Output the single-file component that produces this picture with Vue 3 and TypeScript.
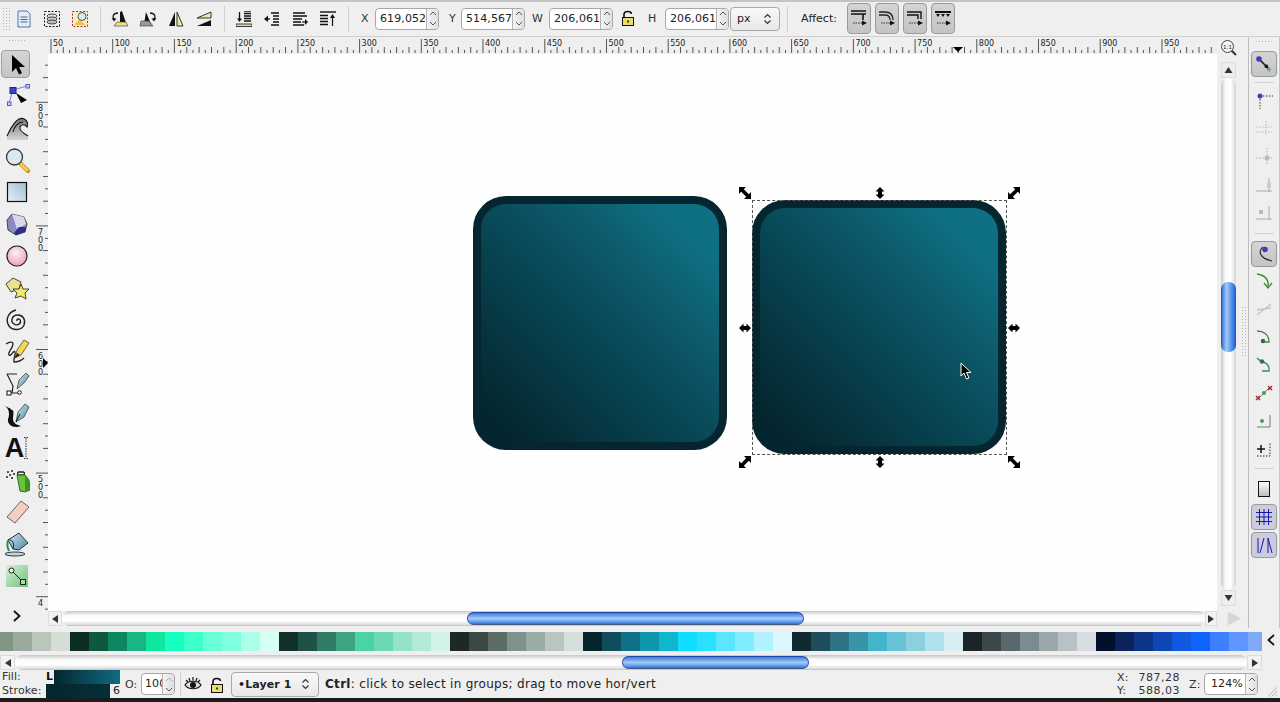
<script setup lang="ts">
const fields = [
  { label: 'X', value: '619,052', cls: 'lx' },
  { label: 'Y', value: '514,567', cls: 'ly' },
  { label: 'W', value: '206,061', cls: 'lw' },
  { label: 'H', value: '206,061', cls: 'lh' },
]

const swatches: string[] = [
  '#7f9684', '#9aaa9c', '#b9c6ba', '#d5ddd6',
  '#0d2e23', '#0e5840', '#0d8762', '#18b585', '#0fe69e', '#15ffc0', '#3dffca', '#66ffd6', '#80ffde', '#aaffe8', '#d6fff4',
  '#11302a', '#1f5247', '#2f7d66', '#3ea383', '#4ad4a6', '#6bd9b5', '#94e3c8', '#b3e9d8', '#d1f3e8',
  '#1e2926', '#3c4845', '#5b6c67', '#7e918c', '#9aaca6', '#b8c5c1', '#d6dedc',
  '#06252d', '#0f4c5c', '#10708a', '#0f97ad', '#10b6cd', '#10dcff', '#2ae0ff', '#5ae6ff', '#80ecff', '#b0f2ff', '#daf6ff',
  '#0f2a31', '#1f4d5c', '#2e7485', '#3a94a8', '#44b4cc', '#69c3d6', '#8cd0e0', '#b0e0ea', '#d5edf3',
  '#1b2528', '#3d4849', '#5b686b', '#7b8b90', '#9aa8ac', '#b7c2c6', '#d6dcdf',
  '#020f2d', '#0b2358', '#0c3588', '#0f47b5', '#1059e0', '#0f66ff', '#3a80ff', '#5f96ff', '#80aaf8',
]

const hStep = 1.2344
const hTicks = Array.from({ length: 189 }, (_, i) => {
  const x = 3 + i * 5 * hStep
  const top = i % 10 === 0 ? 2 : i % 2 === 0 ? 10 : 13
  return { x: +x.toFixed(1), top }
})
const hLabels = Array.from({ length: 19 }, (_, i) => ({
  x: +(5 + i * 50 * hStep).toFixed(1),
  t: String(50 + i * 50),
}))

const vStep = 1.236
const vTicks = Array.from({ length: 46 }, (_, i) => {
  const y = 48.3 + (i - 4) * 10 * vStep
  const n = i - 4
  const mod = ((n % 10) + 10) % 10
  const left = mod === 0 ? 3 : mod % 2 === 0 ? 10 : 12
  return { y: +y.toFixed(1), left }
})
const vLabels = [
  { y: 48.3, d: ['8', '0', '0'] },
  { y: 171.9, d: ['7', '0', '0'] },
  { y: 295.5, d: ['6', '0', '0'] },
  { y: 419.1, d: ['5', '0', '0'] },
  { y: 542.7, d: ['4'] },
]

const diag = 'M0 0H7L4.8 2.2 9.8 7.2 12 5V12H5L7.2 9.8 2.2 4.800 0 7Z'
const hor = 'M0 6 4.500 1.500V4H7.500V1.500L12 6 7.500 10.500V8H4.500V10.500Z'
const handles = [
  { x: 697, y: 139, d: diag, r: 0 },
  { x: 832, y: 139, d: hor, r: 90 },
  { x: 966, y: 139, d: diag, r: 90 },
  { x: 697, y: 274, d: hor, r: 0 },
  { x: 966, y: 274, d: hor, r: 0 },
  { x: 697, y: 408, d: diag, r: 90 },
  { x: 832, y: 408, d: hor, r: 90 },
  { x: 966, y: 408, d: diag, r: 0 },
]
</script>

<template>
  <div class="app">
    <svg class="defs" width="0" height="0" aria-hidden="true">
      <defs>
        <linearGradient id="gRect" x1="0" y1="1" x2="1" y2="0"><stop offset="0" stop-color="#e6f0f4" /><stop offset="1" stop-color="#9dc0d2" /></linearGradient>
        <radialGradient id="gPink" cx=".45" cy=".35" r=".7"><stop offset="0" stop-color="#fdf0f4" /><stop offset="1" stop-color="#eb9db5" /></radialGradient>
        <linearGradient id="gWave" x1="0" y1="0" x2="0" y2="1"><stop offset="0" stop-color="#777" /><stop offset="1" stop-color="#d4d4d4" /></linearGradient>
        <linearGradient id="gGreen" x1="0" y1="0" x2="1" y2="1"><stop offset="0" stop-color="#d6f0d6" /><stop offset="1" stop-color="#6fc07f" /></linearGradient>
        <linearGradient id="gNib" x1="0" y1="0" x2="1" y2="1"><stop offset="0" stop-color="#cfe3ee" /><stop offset="1" stop-color="#4a8aa8" /></linearGradient>
        <linearGradient id="gPage" x1="0" y1="0" x2="0" y2="1"><stop offset="0" stop-color="#fff" /><stop offset="1" stop-color="#bbb" /></linearGradient>
      </defs>
    </svg>

    <header class="topbar">
      <span class="grip-v"></span>
      <button class="tb">
        <svg width="16" height="18" viewBox="0 0 16 18"><path d="M2 1H11L14 4V17H2Z" fill="#e4edf6" stroke="#4f79a8" /><path d="M4.500 7H11.500M4.500 9.500H11.500M4.500 12H11.500" stroke="#3a6ea5" /></svg>
      </button>
      <button class="tb">
        <svg width="18" height="18" viewBox="0 0 18 18"><rect x="1.500" y="1.500" width="15" height="15" fill="none" stroke="#111" stroke-dasharray="2 1.500" /><ellipse cx="9" cy="6" rx="5" ry="2" fill="#ddd" stroke="#444" /><ellipse cx="9" cy="9" rx="5" ry="2" fill="#ccc" stroke="#444" /><ellipse cx="9" cy="12" rx="5" ry="2" fill="#bbb" stroke="#444" /></svg>
      </button>
      <button class="tb">
        <svg width="18" height="18" viewBox="0 0 18 18"><rect x="1.500" y="1.500" width="15" height="15" fill="#f6eec2" stroke="#a33" stroke-dasharray="2 1.500" /><path d="M3 15 8 10 15 15Z" fill="#e6c64a" /><circle cx="11" cy="6.500" r="4" fill="#dce8ee" stroke="#555" /></svg>
      </button>
      <span class="sep"></span>
      <button class="tb">
        <svg width="18" height="18" viewBox="0 0 18 18"><path d="M11 1 15 13H9V2Z" fill="#111" /><path d="M3 16H17L15 12H6Z" fill="#efe08a" stroke="#333" stroke-width=".6" /><path d="M7 3C2 3 1 7 3 9" fill="none" stroke="#111" stroke-width="1.300" /><path d="M.5 8 3 11.500 5.500 8.500Z" fill="#111" /></svg>
      </button>
      <button class="tb">
        <svg width="18" height="18" viewBox="0 0 18 18"><path d="M7 2 12 14H5Z" fill="#111" /><path d="M1 16H14L10 11H2Z" fill="#999" stroke="#333" stroke-width=".6" /><path d="M11 3C16 3 17 7 15 9" fill="none" stroke="#111" stroke-width="1.300" /><path d="M17.500 8 15 11.500 12.500 8.500Z" fill="#111" /></svg>
      </button>
      <button class="tb">
        <svg width="16" height="16" viewBox="0 0 16 16"><path d="M7 1V15H1Z" fill="#111" /><path d="M9 1V15H15Z" fill="#f0e6a8" stroke="#333" /></svg>
      </button>
      <button class="tb">
        <svg width="16" height="16" viewBox="0 0 16 16"><path d="M15 1V7H1Z" fill="#f0e6a8" stroke="#333" /><path d="M15 9V15H1Z" fill="#111" /></svg>
      </button>
      <span class="sep"></span>
      <button class="tb">
        <svg width="16" height="16" viewBox="0 0 16 16"><path d="M8 0H15M8 2.500H15M8 5H15M8 7.500H15M8 10H15" stroke="#111" stroke-width="1.300" /><path d="M3.500 1V8" stroke="#111" stroke-width="1.300" /><path d="M1 7.500H6L3.500 11Z" fill="#111" /><path d="M0 13H16V15.500H0Z" fill="#e8dc9a" stroke="#111" stroke-width=".8" /></svg>
      </button>
      <button class="tb">
        <svg width="16" height="16" viewBox="0 0 16 16"><path d="M7 2H15M9 5H15M9 8H15M9 11H15M7 14H15" stroke="#111" stroke-width="1.300" /><path d="M1 8H6" stroke="#111" stroke-width="1.300" /><path d="M4 4.500V11L0 8Z" fill="#111" /></svg>
      </button>
      <button class="tb">
        <svg width="16" height="16" viewBox="0 0 16 16"><path d="M1 2H13M1 5H15M1 8H10M1 11H9M1 14H12" stroke="#111" stroke-width="1.300" /><path d="M10 11H14" stroke="#111" stroke-width="1.200" /><path d="M13 8V14L16 11Z" fill="#111" /></svg>
      </button>
      <button class="tb">
        <svg width="16" height="16" viewBox="0 0 16 16"><path d="M0 1H16" stroke="#111" stroke-width="1.400" /><path d="M0 4.500H8M0 7.500H8M0 10.500H8M0 13.500H8" stroke="#111" stroke-width="1.300" /><path d="M12.500 6V15" stroke="#111" stroke-width="1.200" /><path d="M10 7 12.500 3 15 7Z" fill="#111" /></svg>
      </button>
      <span class="sep"></span>

      <template v-for="f in fields" :key="f.label">
        <span class="flabel" :class="f.cls">{{ f.label }}</span>
        <span class="spin">
          <span class="spin-val">{{ f.value }}</span>
          <span class="spin-btns">
            <svg width="8" height="5" viewBox="0 0 8 5"><path d="M1 4 4 1 7 4" fill="none" stroke="#555" /></svg>
            <svg width="8" height="5" viewBox="0 0 8 5"><path d="M1 1 4 4 7 1" fill="none" stroke="#555" /></svg>
          </span>
        </span>
        <span v-if="f.label === 'W'" class="lockbox">
          <svg width="14" height="17" viewBox="0 0 14 17"><path d="M3 8V4.500C3 .5 10 .5 10.500 4" fill="none" stroke="#111" stroke-width="1.600" /><rect x="1.500" y="7.500" width="11" height="8" fill="#e8de6a" stroke="#111" /><rect x="6" y="10.500" width="2" height="2" fill="#333" /></svg>
        </span>
      </template>
      <span class="combo units">
        <span>px</span>
        <svg width="9" height="12" viewBox="0 0 9 12"><path d="M1.500 4.500 4.500 1.500 7.500 4.500M1.500 7.500 4.500 10.500 7.500 7.500" fill="none" stroke="#333" stroke-width="1.200" /></svg>
      </span>
      <span class="sep sep-affect"></span>
      <span class="affect">Affect:</span>
      <button class="aff">
        <svg width="18" height="20" viewBox="0 0 18 20"><path d="M1 2H16M1 5H16" stroke="#111" stroke-width="1.600" /><path d="M13 5V11" stroke="#111" stroke-width="1.600" /><path d="M3 14H12" stroke="#333" stroke-dasharray="1.500 1" /><path d="M12 11.500 17 14 12 16.500Z" fill="#111" /></svg>
      </button>
      <button class="aff">
        <svg width="18" height="20" viewBox="0 0 18 20"><path d="M1 3H7C12 3 15 6 15 11M1 6H7C10 6 12 8 12 11" fill="none" stroke="#222" stroke-width="1.300" /><path d="M3 14H12" stroke="#333" stroke-dasharray="1.500 1" /><path d="M12 11.500 17 14 12 16.500Z" fill="#111" /></svg>
      </button>
      <button class="aff">
        <svg width="18" height="20" viewBox="0 0 18 20"><path d="M1 3H15V10M1 6H12V10" fill="none" stroke="#111" stroke-width="1.400" /><path d="M3 14H12" stroke="#333" stroke-dasharray="1.500 1" /><path d="M12 11.500 17 14 12 16.500Z" fill="#111" /></svg>
      </button>
      <button class="aff">
        <svg width="18" height="20" viewBox="0 0 18 20"><path d="M1 3H17" stroke="#111" stroke-width="2" /><path d="M2 5 4 8 6 5ZM7 5 9 8 11 5ZM12 5 14 8 16 5Z" fill="#111" /><path d="M3 14H12" stroke="#333" stroke-dasharray="1.500 1" /><path d="M12 11.500 17 14 12 16.500Z" fill="#111" /></svg>
      </button>
    </header>

    <section class="main">
      <aside class="ltools">
        <span class="grip-h"></span>
        <button class="lt active">
          <svg width="24" height="24" viewBox="0 0 24 24"><path d="M7 3V20L11 16 14 22.500 17 21 14 15H20Z" fill="#000" /></svg>
        </button>
        <button class="lt">
          <svg width="26" height="26" viewBox="0 0 26 26"><path d="M9 7 23 3M9 7 5 20" stroke="#7b7be0" /><rect x="6" y="4.500" width="6" height="6" fill="#3f3fd0" stroke="#22228a" /><rect x="22" y="1.500" width="3.500" height="3.500" fill="#ccf" stroke="#55c" /><rect x="3.500" y="19" width="3.500" height="3.500" fill="#ccf" stroke="#55c" /><path d="M12 10 23 17 17 20Z" fill="#000" /></svg>
        </button>
        <button class="lt">
          <svg width="26" height="26" viewBox="0 0 26 26"><path d="M3 21C6 15 9 7 15 4C20 2 25 6 23 12C21 9 17 9 16 12C15 15 19 18 24 21V25H3Z" fill="url(#gWave)" /><path d="M3 21C6 15 9 7 15 4C20 2 25 6 23 12C21 9 17 9 16 12C15 15 19 18 24 21M9 17C10 12 14 7 19 7" fill="none" stroke="#111" stroke-width="1.100" /></svg>
        </button>
        <button class="lt">
          <svg width="26" height="26" viewBox="0 0 26 26"><path d="M16 16 24 24" stroke="#c9932b" stroke-width="4.500" stroke-linecap="round" /><path d="M17 17 23 23" stroke="#f2cf4f" stroke-width="2.500" stroke-linecap="round" /><circle cx="10.500" cy="10" r="8" fill="#dce8f0" stroke="#333" stroke-width="1.300" /></svg>
        </button>
        <button class="lt">
          <svg width="24" height="24" viewBox="0 0 24 24"><rect x="2.500" y="2.500" width="19" height="19" fill="url(#gRect)" stroke="#111" stroke-width="1.200" /></svg>
        </button>
        <button class="lt">
          <svg width="24" height="24" viewBox="0 0 24 24"><path d="M7 2 19 5 22 12 20 20 11 23 3 18 2 8Z" fill="#8b8bc4" stroke="#444" /><path d="M7 2 19 5 21 12 12 17Z" fill="#d8d8ec" /><path d="M9 21 14 15 21 15 20 20 11 23Z" fill="#2d2d90" /></svg>
        </button>
        <button class="lt">
          <svg width="24" height="24" viewBox="0 0 24 24"><circle cx="12" cy="12" r="10" fill="url(#gPink)" stroke="#222" stroke-width="1.200" /></svg>
        </button>
        <button class="lt">
          <svg width="26" height="26" viewBox="0 0 26 26"><path d="M9 3 17 7 15 14 7 17 2 9Z" fill="#ece28a" stroke="#444" /><path d="M17 9 19 14 25 14 21 18 22 24 17 21 11 23 13 18 9 14 15 14Z" fill="#f3e86a" stroke="#444" /></svg>
        </button>
        <button class="lt">
          <svg width="24" height="24" viewBox="0 0 24 24"><path d="M12 13C11 10.500 15 10 15.500 13C16 16 12 18 9 16C5 13.500 7 7.500 12 7C18 6.500 21 12 19 17C16.500 22.500 8 23 4 18C0 12 3 4 11 2" fill="none" stroke="#222" stroke-width="1.400" /></svg>
        </button>
        <button class="lt">
          <svg width="26" height="26" viewBox="0 0 26 26"><path d="M2 5C5 3 9 2 9 5C9 9 3 14 5 16C7 18 10 10 11 13C12 16 9 20 10 23C13 23 17 22 20 19" fill="none" stroke="#222" stroke-width="1.300" /><path d="M11 19 13 11 20 1 25 4 17 16Z" fill="#f2d84a" stroke="#444" stroke-width=".8" /><path d="M11 19 13 14 16 16Z" fill="#222" /></svg>
        </button>
        <button class="lt">
          <svg width="26" height="26" viewBox="0 0 26 26"><path d="M3 3H13M3 3 9 15 8 22H15" fill="none" stroke="#222" stroke-width="1.200" /><rect x="3" y="20" width="4" height="4" fill="#fff" stroke="#111" /><circle cx="15.500" cy="21.500" r="1.800" fill="#fff" stroke="#111" /><path d="M13 18 15 9 22 2 25 5 20 12Z" fill="url(#gNib)" stroke="#444" stroke-width=".8" /></svg>
        </button>
        <button class="lt">
          <svg width="26" height="26" viewBox="0 0 26 26"><path d="M1 3C5 6 6 11 4 16C3 22 10 26 17 23C13 22 9 20 9 16C9 12 10 10 9 7C7 8 7 5 5 5Z" fill="#111" /><path d="M12 19 14 9 21 1 25 4 20 14Z" fill="url(#gNib)" stroke="#444" stroke-width=".8" /><path d="M12 19 16 11" stroke="#111" /></svg>
        </button>
        <button class="lt textt">
          <span class="glyph-a">A</span>
          <svg class="a-mark" width="4" height="22" viewBox="0 0 4 22"><path d="M2 1V21M0 .5H4M0 21.500H4" fill="none" stroke="#333" stroke-dasharray="1.500 1" /></svg>
        </button>
        <button class="lt">
          <svg width="26" height="26" viewBox="0 0 26 26"><path d="M3 4h2v2H3zM7 3h2v2H7zM5 7h2v2H5zM9 6h2v2H9zM2 9h2v2H2zM7 10h2v2H7z" fill="#555" /><path d="M15 5C13 5 13 8 15 8H19C21 8 21 5 19 5Z" fill="none" stroke="#222" stroke-width="1.300" /><path d="M13 8 21 8 25 13 26 23 21 25 16 24Z" fill="#66c23f" stroke="#2f6f22" /><path d="M21 9 25 14 25 23 21 24Z" fill="#3e8f2a" /></svg>
        </button>
        <button class="lt">
          <svg width="24" height="24" viewBox="0 0 24 24"><path d="M16 1 24 7 10 23 2 17Z" fill="#f1cfc4" stroke="#7a5f58" /></svg>
        </button>
        <button class="lt">
          <svg width="26" height="26" viewBox="0 0 26 26"><path d="M4 9 15 2 24 12 15 19 9 18Z" fill="url(#gNib)" stroke="#333" /><path d="M4 9C8 8 11 12 9 18" fill="none" stroke="#222" /><path d="M4 9C3 13 4 18 5 20" fill="none" stroke="#2a8c5c" stroke-width="2" /><ellipse cx="11" cy="23" rx="10" ry="2" fill="#bcd9c4" stroke="#225" stroke-width=".9" /></svg>
        </button>
        <button class="lt">
          <svg width="24" height="24" viewBox="0 0 24 24"><rect x="1" y="1" width="22" height="22" fill="url(#gGreen)" /><path d="M7 7 18 18" stroke="#222" /><circle cx="6.500" cy="6.500" r="2.500" fill="#e5f2e5" stroke="#222" /><rect x="15.500" y="15.500" width="5" height="5" fill="#a8dba8" stroke="#222" /></svg>
        </button>
        <span class="more">
          <svg width="10" height="12" viewBox="0 0 10 12"><path d="M2 1 7.500 6 2 11" fill="none" stroke="#111" stroke-width="1.800" /></svg>
        </span>
      </aside>

      <div class="work">
        <div class="rulerow">
          <span class="corner"></span>
          <svg class="hruler" width="1169" height="17" viewBox="0 0 1169 17">
            <line v-for="t in hTicks" :key="t.x" :x1="t.x" :x2="t.x" :y1="t.top" y2="16" stroke="#555" stroke-width="1" />
            <text v-for="l in hLabels" :key="l.t" :x="l.x" y="9" class="rtext">{{ l.t }}</text>
            <path d="M905 10H915L910 15Z" fill="#000" />
          </svg>
          <span class="zoom11">
            <svg width="18" height="18" viewBox="0 0 18 18"><path d="M11 11 16 16" stroke="#333" stroke-width="2" /><circle cx="7.500" cy="7.500" r="6" fill="#f4f4f4" stroke="#444" /><text x="7.500" y="10" text-anchor="middle" class="oneone">1:1</text></svg>
          </span>
        </div>
        <div class="midrow">
          <svg class="vruler" width="15" height="557" viewBox="0 0 15 557">
            <line v-for="t in vTicks" :key="t.y" :x1="t.left" x2="15" :y1="t.y" :y2="t.y" stroke="#555" stroke-width="1" />
            <template v-for="l in vLabels" :key="l.y">
              <text v-for="(c, i) in l.d" :key="i" x="5" :y="l.y + 9 + i * 8" class="rtext">{{ c }}</text>
            </template>
            <path d="M10 304V314L15 309Z" fill="#000" />
          </svg>
          <div class="canvas">
            <div class="shape s1"></div>
            <div class="shape s2"></div>
            <div class="selection"></div>
            <svg
              v-for="(h, i) in handles"
              :key="i"
              class="handle"
              width="12"
              height="12"
              viewBox="0 0 12 12"
              :style="{ left: h.x - 6 + 'px', top: h.y - 6 + 'px', transform: 'rotate(' + h.r + 'deg)' }"
            >
              <path :d="h.d" fill="#000" />
            </svg>
            <svg class="cursor" width="12" height="18" viewBox="0 0 12 18"><path d="M1 1V14L4 11 6.500 17 9 16 6.500 10.500H11Z" fill="#000" stroke="#fff" stroke-width="1" /></svg>
          </div>
          <div class="vscroll">
            <span class="vbtn"><svg width="9" height="6" viewBox="0 0 9 6"><path d="M.5 6 4.500 0 8.500 6Z" fill="#333" /></svg></span>
            <div class="vtrough"><div class="vthumb"></div></div>
            <span class="vbtn"><svg width="9" height="6" viewBox="0 0 9 6"><path d="M.5 0 4.500 6 8.500 0Z" fill="#333" /></svg></span>
          </div>
          <span class="grip-side"></span>
        </div>
        <div class="hsbrow">
          <span class="arrbtn"><svg width="6" height="8" viewBox="0 0 6 8"><path d="M6 0V8L0 4Z" fill="#333" /></svg></span>
          <div class="htrough"><div class="hthumb thumb1"></div></div>
          <span class="arrbtn"><svg width="6" height="8" viewBox="0 0 6 8"><path d="M0 0V8L6 4Z" fill="#333" /></svg></span>
          <span class="cms"><svg width="15" height="15" viewBox="0 0 15 15"><path d="M1 1 14 7.500 1 14Z" fill="#d6d6d6" stroke="#ddd" stroke-linejoin="round" /></svg></span>
        </div>
      </div>

      <aside class="rtools">
        <span class="grip-r"></span>
        <button class="rt on">
          <svg width="20" height="20" viewBox="0 0 20 20"><path d="M5 5 14 14" stroke="#111" stroke-width="1.500" /><path d="M15.500 15.500 10 13 13 10Z" fill="#111" /><circle cx="5" cy="5" r="2.800" fill="#4a38b8" /><path d="M15 13 17.500 15.500 15 18 12.500 15.500Z" fill="#67b08c" /></svg>
        </button>
        <span class="rsep"></span>
        <span class="ri"><svg width="20" height="20" viewBox="0 0 20 20"><circle cx="6" cy="6" r="2.500" fill="#4a38b8" /><path d="M9 6H19M6 9V19" stroke="#333" stroke-dasharray="1.500 1.500" /></svg></span>
        <span class="ri"><svg width="20" height="20" viewBox="0 0 20 20"><path d="M2 14H18M12 3V18M2 9H18" stroke="#bbb" stroke-dasharray="1.500 1.500" /></svg></span>
        <span class="ri"><svg width="20" height="20" viewBox="0 0 20 20"><path d="M2 12H18M13 2V18" stroke="#aaa" stroke-dasharray="1.500 1.500" /><circle cx="13" cy="12" r="2.500" fill="#bbb" /></svg></span>
        <span class="ri"><svg width="20" height="20" viewBox="0 0 20 20"><path d="M2 17H18M15 4V18" stroke="#aaa" /><path d="M13 10 15 4 17 10V14H13Z" fill="#ccc" /></svg></span>
        <span class="ri"><svg width="20" height="20" viewBox="0 0 20 20"><path d="M2 17H18M15 4V18" stroke="#aaa" /><rect x="5" y="8" width="4" height="4" fill="#bbb" /></svg></span>
        <span class="rsep rsep2"></span>
        <button class="rt on">
          <svg width="20" height="20" viewBox="0 0 20 20"><path d="M9 3C4 7 5 14 18 17" fill="none" stroke="#333" stroke-width="1.200" /><circle cx="11" cy="5.500" r="2.800" fill="#4a38b8" /></svg>
        </button>
        <span class="ri"><svg width="20" height="20" viewBox="0 0 20 20"><path d="M3 3C9 4 15 7 14 15" fill="none" stroke="#3c8a36" stroke-width="1.400" /><path d="M10 12 14 17 18 12" fill="none" stroke="#3c8a36" stroke-width="1.400" /></svg></span>
        <span class="ri"><svg width="20" height="20" viewBox="0 0 20 20"><path d="M3 16 17 5M3 11 17 9" stroke="#c4c4c4" stroke-width="1.300" /></svg></span>
        <span class="ri"><svg width="20" height="20" viewBox="0 0 20 20"><path d="M3 4C9 4 15 7 15 15H7" fill="none" stroke="#3c8a36" stroke-width="1.300" /><circle cx="9" cy="14" r="2.200" fill="#2f6b5a" /></svg></span>
        <span class="ri"><svg width="20" height="20" viewBox="0 0 20 20"><path d="M3 3C7 8 16 6 15 16H8" fill="none" stroke="#3c8a6a" stroke-width="1.300" /><circle cx="8" cy="6.500" r="2.200" fill="#2f6b5a" /></svg></span>
        <span class="ri"><svg width="20" height="20" viewBox="0 0 20 20"><path d="M4 16 16 4" stroke="#777" /><circle cx="10" cy="10" r="2" fill="#4c9a5a" /><path d="M2 13 6 17M6 13 2 17M14 3 18 7M18 3 14 7" stroke="#b02030" stroke-width="1.400" /></svg></span>
        <span class="ri"><svg width="20" height="20" viewBox="0 0 20 20"><path d="M3 16H16V4" fill="none" stroke="#777" /><circle cx="8" cy="10" r="2" fill="#4c9a5a" /></svg></span>
        <span class="ri"><svg width="20" height="20" viewBox="0 0 20 20"><path d="M3 10H11M7 6V14" stroke="#111" stroke-width="1.500" /><path d="M3 17H16V4" fill="none" stroke="#222" stroke-dasharray="1.500 1.500" /></svg></span>
        <span class="rsep rsep3"></span>
        <span class="ri ri-page"><svg width="16" height="18" viewBox="0 0 16 18"><rect x="2.500" y="1.500" width="11" height="15" fill="url(#gPage)" stroke="#111" /></svg></span>
        <button class="rt on blue">
          <svg width="18" height="18" viewBox="0 0 18 18"><path d="M1 4.500H17M1 9H17M1 13.500H17M4.500 1V17M9 1V17M13.500 1V17" stroke="#1414b0" /></svg>
        </button>
        <button class="rt on blue">
          <svg width="18" height="18" viewBox="0 0 18 18"><path d="M3 2V17M9 2 5 17M13 2 17 17M13 2V17" fill="none" stroke="#1414b0" stroke-width="1" /></svg>
        </button>
      </aside>
    </section>

    <div class="palette">
      <div class="swatches">
        <span v-for="(c, i) in swatches" :key="i" class="swatch" :style="{ background: c }"></span>
      </div>
      <span class="palchev"><svg width="10" height="12" viewBox="0 0 10 12"><path d="M8 1 2.500 6 8 11" fill="none" stroke="#111" stroke-width="1.800" /></svg></span>
    </div>

    <div class="palscroll">
      <span class="arrbtn a2"><svg width="6" height="8" viewBox="0 0 6 8"><path d="M6 0V8L0 4Z" fill="#333" /></svg></span>
      <div class="htrough"><div class="hthumb thumb2"></div></div>
      <span class="arrbtn a2"><svg width="6" height="8" viewBox="0 0 6 8"><path d="M0 0V8L6 4Z" fill="#333" /></svg></span>
    </div>

    <footer class="status">
      <div class="fslabels"><span>Fill:</span><span>Stroke:</span></div>
      <div class="fsval">
        <div class="fillrow"><b class="ll">L</b><span class="fillg"></span></div>
        <div class="strokerow"><span class="strokeg"></span><span class="sw6">6</span></div>
      </div>
      <span class="olabel">O:</span>
      <span class="spin small">
        <span class="spin-val clip">100</span>
        <span class="spin-btns">
          <svg width="8" height="5" viewBox="0 0 8 5"><path d="M1 4 4 1 7 4" fill="none" stroke="#aaa" /></svg>
          <svg width="8" height="5" viewBox="0 0 8 5"><path d="M1 1 4 4 7 1" fill="none" stroke="#555" /></svg>
        </span>
      </span>
      <span class="sep2"></span>
      <span class="eye"><svg width="18" height="14" viewBox="0 0 18 14"><path d="M2 3 4 5M5 1 6 4M9 0V3.500M13 1 12 4M16 3 14 5" stroke="#111" stroke-width="1.200" /><path d="M1 8C4 3 14 3 17 8C14 13 4 13 1 8Z" fill="#ddd" stroke="#111" stroke-width="1.200" /><circle cx="9" cy="8" r="3" fill="#111" /></svg></span>
      <span class="lock2"><svg width="14" height="17" viewBox="0 0 14 17"><path d="M3 8V4.500C3 .5 10 .5 10.500 4" fill="none" stroke="#111" stroke-width="1.600" /><rect x="1.500" y="7.500" width="11" height="8" fill="#e8de6a" stroke="#111" /><rect x="6" y="10.500" width="2" height="2" fill="#333" /></svg></span>
      <span class="combo layer">
        <b>•Layer 1</b>
        <svg width="9" height="12" viewBox="0 0 9 12"><path d="M1.500 4.500 4.500 1.500 7.500 4.500M1.500 7.500 4.500 10.500 7.500 7.500" fill="none" stroke="#333" stroke-width="1.200" /></svg>
      </span>
      <span class="msg"><b>Ctrl</b>: click to select in groups; drag to move hor/vert</span>
      <div class="coords">
        <div><span>X:</span><span>787,28</span></div>
        <div><span>Y:</span><span>588,03</span></div>
      </div>
      <span class="zlabel">Z:</span>
      <span class="spin zoom">
        <span class="spin-val">124%</span>
        <span class="spin-btns">
          <svg width="8" height="5" viewBox="0 0 8 5"><path d="M1 4 4 1 7 4" fill="none" stroke="#555" /></svg>
          <svg width="8" height="5" viewBox="0 0 8 5"><path d="M1 1 4 4 7 1" fill="none" stroke="#555" /></svg>
        </span>
      </span>
      <span class="resize"><svg width="14" height="14" viewBox="0 0 14 14"><path d="M13 3 3 13M13 7 7 13M13 11 11 13" stroke="#aaa" /></svg></span>
    </footer>
    <div class="desk"></div>
  </div>
</template>

<style>
html, body { margin: 0; padding: 0; background: #efefef; }
</style>

<style scoped>
* { box-sizing: border-box; }
.app {
  width: 1280px; height: 702px; overflow: hidden; display: flex; flex-direction: column;
  background: #efefef; color: #222; font-family: "DejaVu Sans", sans-serif; font-size: 11px; position: relative;
}
.defs { position: absolute; }
button { border: 0; background: none; padding: 0; margin: 0; display: flex; align-items: center; justify-content: center; font: inherit; color: inherit; }
.topbar { height: 37px; flex: none; display: flex; align-items: center; border-top: 2px solid #c4c4c4; border-bottom: 1px solid #cfcfcf; padding: 0 0 1px 2px; }
.grip-v { width: 8px; height: 24px; background-image: radial-gradient(#b4b4b4 .6px, transparent .8px); background-size: 3px 3px; }
.tb { width: 28px; height: 28px; flex: none; }
.sep { width: 12px; height: 26px; flex: none; position: relative; background: linear-gradient(#cfcfcf, #cfcfcf) center / 1px 100% no-repeat; }
.flabel { flex: none; text-align: left; color: #333; }
.lx { margin-left: 7px; width: 14px; }
.ly { margin-left: 10px; width: 12px; }
.lw { margin-left: 7px; width: 17px; }
.lh { margin-left: 6px; width: 17px; }
.spin { flex: none; width: 64px; height: 22px; display: flex; background: #fff; border: 1px solid #a8a8a8; border-radius: 4px; overflow: hidden; }
.spin-val { flex: 1; line-height: 20px; padding-left: 4px; white-space: nowrap; overflow: hidden; letter-spacing: .1px; }
.spin-btns { width: 12px; flex: none; display: flex; flex-direction: column; align-items: center; justify-content: space-around; background: linear-gradient(90deg, #f4f4f4, #dedede); border-left: 1px solid #b4b4b4; }
.lockbox { width: 29px; flex: none; display: flex; justify-content: center; }
.combo { flex: none; height: 24px; display: flex; align-items: center; justify-content: space-between; border: 1px solid #a8a8a8; border-radius: 4px; background: linear-gradient(#f8f8f8, #e8e8e8); }
.units { width: 50px; margin-left: 1px; padding: 0 7px 0 6px; }
.sep-affect { width: 14px; }
.affect { margin-left: 7px; width: 46px; flex: none; }
.aff { width: 24px; height: 31px; margin-right: 4px; flex: none; border: 1px solid #9a9a9a; border-radius: 4px; background: linear-gradient(#d4d4d4, #c4c4c4); }

.main { height: 591px; flex: none; display: flex; }
.ltools { width: 33px; flex: none; display: flex; flex-direction: column; align-items: center; }
.grip-h { width: 18px; height: 11px; flex: none; background: radial-gradient(#b4b4b4 .6px, transparent .8px) 0 2px / 3px 3px; background-repeat: repeat-x; }
.lt { width: 33px; height: 32px; flex: none; position: relative; }
.lt.active::before { content: ""; position: absolute; left: 1px; right: 3px; top: 2px; bottom: 2px; background: linear-gradient(#d4d4d4, #c4c4c4); border: 1px solid #a0a0a0; border-radius: 4px; }
.lt.active svg { position: relative; }
.glyph-a { font-family: "Liberation Sans", sans-serif; font-weight: 700; font-size: 27px; line-height: 1; color: #111; }
.more { height: 24px; margin-top: 12px; display: flex; align-items: center; }

.work { width: 1215px; flex: none; display: flex; flex-direction: column; }
.rulerow { height: 17px; flex: none; display: flex; }
.corner { width: 15px; flex: none; }
.hruler { flex: none; display: block; }
.rtext { font-family: "DejaVu Sans", sans-serif; font-size: 8px; fill: #222; }
.oneone { font-family: "DejaVu Sans", sans-serif; font-size: 5.500px; fill: #222; }
.zoom11 { flex: none; margin-left: 3px; margin-top: 2px; height: 18px; position: relative; z-index: 1; }
.midrow { height: 557px; flex: none; display: flex; }
.vruler { flex: none; display: block; }
.canvas { width: 1169px; flex: none; background: #fefefe; position: relative; overflow: hidden; }
.shape {
  position: absolute; width: 254px; height: 254px; border: 8px solid transparent; border-radius: 33px;
  background:
    linear-gradient(45deg, #04252d 6%, #073f4c 38%, #0b5566 62%, #0f7083 88%) padding-box,
    linear-gradient(#05262e, #05262e) border-box;
}
.s1 { left: 425px; top: 142px; }
.s2 { left: 704px; top: 146px; }
.selection { position: absolute; left: 704px; top: 146px; width: 255px; height: 255px; border: 1px dashed #555; }
.handle { position: absolute; }
.cursor { position: absolute; left: 912px; top: 308px; }
.vscroll { width: 15px; margin-left: 4px; margin-top: 8px; margin-bottom: 5px; flex: none; display: flex; flex-direction: column; }
.vbtn { height: 16px; flex: none; display: flex; align-items: center; justify-content: center; background: #ededed; border: 1px solid #dcdcdc; }
.vtrough { flex: 1; border-radius: 7px; background: linear-gradient(90deg, #c8c8c8, #fafafa 30%, #fff 65%, #d4d4d4); position: relative; }
.vthumb { position: absolute; left: 0; right: 0; top: 204px; height: 70px; border-radius: 7px; background: linear-gradient(90deg, #1f4fb0, #5f9cef 18%, #a8c8f5 38%, #6aa4f0 60%, #2c6fd8 90%, #244c9c); }
.grip-side { width: 6px; height: 50px; margin: 252px 0 0 5px; flex: none; background-image: radial-gradient(#b4b4b4 .6px, transparent .8px); background-size: 3px 3px; }
.hsbrow { height: 15px; flex: none; display: flex; padding-left: 15px; }
.arrbtn { width: 14px; flex: none; display: flex; align-items: center; justify-content: center; background: #f2f2f2; border: 1px solid #dcdcdc; }
.htrough { flex: 1; position: relative; border-radius: 7px; background: linear-gradient(#c6c6c6, #fafafa 30%, #fff 65%, #dcdcdc 92%, #b8b8b8); }
.hthumb { position: absolute; top: 1px; bottom: 1px; border-radius: 7px; border: 1px solid #1d4aa8; border-bottom-color: #445a80; background: linear-gradient(#3d78dc, #6da3ec 25%, #a8c8f5 50%, #6aa6f0 75%, #2c70d8); }
.thumb1 { left: 405px; width: 337px; }
.cms { width: 32px; flex: none; display: flex; justify-content: center; padding-left: 2px; }
.hsbrow .htrough { flex: none; width: 1143px; }
.hsbrow .arrbtn:nth-of-type(2) { width: 12px; }

.rtools { width: 32px; flex: none; border-left: 1px solid #bdbdbd; border-right: 1px solid #c6c6c6; display: flex; flex-direction: column; align-items: center; }
.grip-r { width: 18px; height: 14px; flex: none; background: radial-gradient(#b4b4b4 .6px, transparent .8px) 0 3px / 3px 3px; background-repeat: repeat-x; }
.rt { width: 26px; height: 26px; flex: none; border: 1px solid #9a9a9a; border-radius: 4px; }
.rt.on { background: linear-gradient(#d4d4d4, #c4c4c4); }
.rt.blue { background: #ccccdc; margin-top: 2px; }
.rsep { width: 20px; height: 1px; flex: none; background: #d4d4d4; margin: 5px 0 3px; }
.rsep2 { margin: 7px 0 7px; }
.rsep3 { margin: 5px 0 6px; }
.ri { width: 28px; height: 28px; flex: none; display: flex; align-items: center; justify-content: center; }
.ri-page { height: 27px; }

.palette { height: 23px; margin-top: 4px; flex: none; display: flex; }
.swatches { width: 1262px; height: 19px; flex: none; display: flex; overflow: hidden; }
.swatch { width: 19px; height: 19px; flex: none; }
.swatch:first-child { margin-left: -6px; }
.palchev { flex: 1; display: flex; justify-content: center; margin-top: 1px; height: 14px; align-items: center; }
.palscroll { width: 1262px; height: 15px; flex: none; display: flex; }
.a2 { width: 15px; }
.thumb2 { left: 607px; width: 187px; }

.status { height: 28px; flex: none; display: flex; align-items: center; letter-spacing: .1px; }
.fslabels { width: 46px; flex: none; padding-left: 2px; display: flex; flex-direction: column; line-height: 14px; color: #333; }
.fsval { width: 74px; flex: none; }
.fillrow, .strokerow { height: 14px; display: flex; align-items: stretch; }
.ll { width: 8px; line-height: 13px; flex: none; color: #111; }
.fillg { width: 66px; background: linear-gradient(90deg, #04272f, #0f6c80); }
.strokeg { width: 64px; background: linear-gradient(90deg, #04262e, #062f38); }
.sw6 { width: 10px; text-align: right; line-height: 14px; }
.olabel { margin-left: 5px; width: 16px; flex: none; color: #333; }
.small { width: 34px; height: 22px; }
.clip { padding-left: 3px; }
.sep2 { width: 1px; height: 24px; background: #d0d0d0; margin-left: 5px; flex: none; }
.eye { margin-left: 3px; width: 18px; flex: none; display: flex; }
.lock2 { margin-left: 8px; flex: none; width: 14px; display: flex; margin-top: 2px; }
.layer { margin-left: 7px; width: 88px; padding: 0 8px 0 6px; height: 25px; }
.msg { margin-left: 6px; flex: none; white-space: nowrap; font-size: 12px; letter-spacing: .3px; }
.coords { margin-left: auto; width: 63px; flex: none; line-height: 13px; display: flex; flex-direction: column; color: #333; }
.coords div { display: flex; justify-content: space-between; }
.coords div span:last-child { letter-spacing: .5px; }
.zlabel { margin-left: 9px; width: 15px; flex: none; color: #333; }
.zoom { width: 54px; height: 22px; }
.zoom .spin-val { padding-left: 6px; }
.resize { margin-left: 7px; margin-right: 2px; width: 13px; align-self: flex-end; display: flex; }
.desk { height: 4px; flex: none; background: #1c1c1c; }
</style>
